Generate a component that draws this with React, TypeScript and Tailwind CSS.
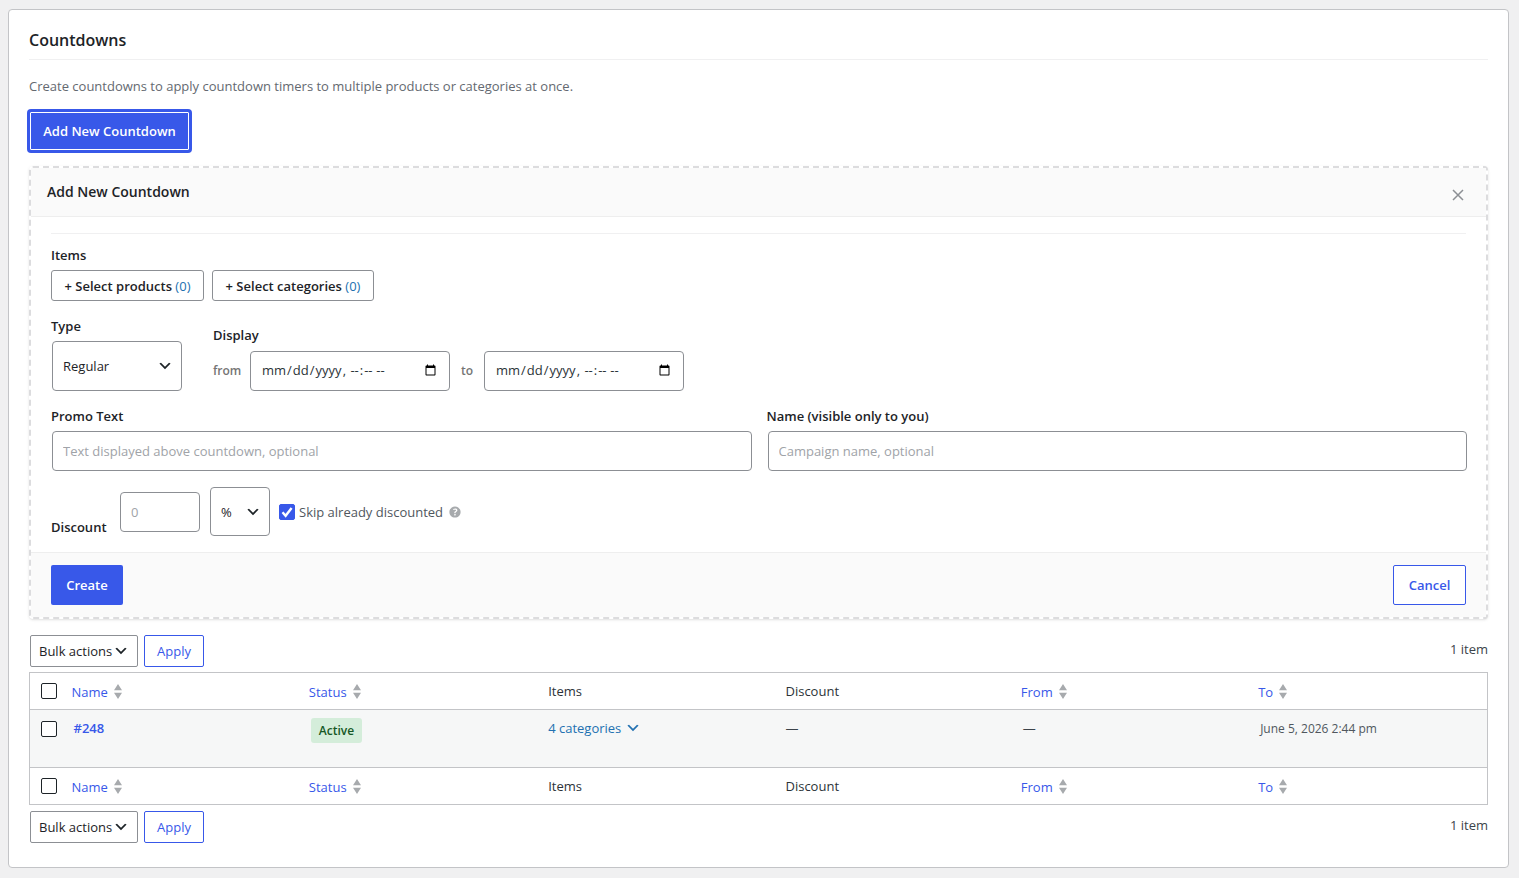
import { useState, type ReactNode, type SelectHTMLAttributes } from "react";

const COLUMNS = [
  { key: "name", label: "Name", sortable: true },
  { key: "status", label: "Status", sortable: true },
  { key: "items", label: "Items", sortable: false },
  { key: "discount", label: "Discount", sortable: false },
  { key: "from", label: "From", sortable: true },
  { key: "to", label: "To", sortable: true },
];

const fieldClass =
  "rounded border border-[#8c8f94] bg-white text-[#2c3338] placeholder:text-[#a0a3a8] focus:outline-none focus:border-[#3858e9]";
const labelClass = "font-semibold text-[#1d2327]";

function Chevron({ className = "" }: { className?: string }) {
  return (
    <svg viewBox="0 0 20 20" className={`size-4 ${className}`} fill="currentColor" aria-hidden="true">
      <path d="M5 6l5 5 5-5 2 1-7 7-7-7 2-1z" />
    </svg>
  );
}

function Select({ wrap = "", className = "", children, ...rest }: SelectHTMLAttributes<HTMLSelectElement> & { wrap?: string; children: ReactNode }) {
  return (
    <div className={`relative ${wrap}`}>
      <select className={`appearance-none w-full h-full border border-[#8c8f94] bg-white text-[#1d2327] ${className}`} {...rest}>
        {children}
      </select>
      <Chevron className="absolute top-1/2 right-[9px] -translate-y-1/2 pointer-events-none text-[#1d2327]" />
    </div>
  );
}

function SortArrows() {
  return (
    <svg viewBox="0 0 8 15" className="w-2 h-[15px]" fill="#a7aaad" aria-hidden="true">
      <path d="M4 0l4 6.300H0zM4 15l4-6.300H0z" />
    </svg>
  );
}

function Toolbar({ id }: { id: string }) {
  return (
    <div className="flex items-center gap-1.5 pl-px">
      <Select id={id} aria-label="Select bulk action" wrap="w-[108px] h-8" className="rounded-xs pl-2 pr-5">
        <option>Bulk actions</option>
        <option>Delete</option>
      </Select>
      <button className="h-8 w-[60px] rounded-xs border border-[#3858e9] bg-white font-medium text-[#3858e9]">Apply</button>
      <span className="ml-auto pb-1 text-[#3c434a]">1 item</span>
    </div>
  );
}

function HeadingRow({ className = "" }: { className?: string }) {
  return (
    <tr className={className}>
      <td className="h-[37px] pl-[11px] align-middle">
        <input type="checkbox" aria-label="Select all" className="block size-4 appearance-none rounded-xs border border-[#1d2327] bg-white" />
      </td>
      {COLUMNS.map((col) => (
        <th key={col.key} scope="col" className={`h-[37px] text-left font-normal text-[#2c3338] ${col.sortable ? "px-2" : "px-2.5"}`}>
          {col.sortable ? (
            <a href="#" className="inline-flex items-center gap-1.5 align-middle text-[#3858e9]">
              {col.label}
              <SortArrows />
            </a>
          ) : (
            col.label
          )}
        </th>
      ))}
    </tr>
  );
}

function CountdownForm({ onClose }: { onClose: () => void }) {
  const [skip, setSkip] = useState(true);

  return (
    <form onSubmit={(e) => e.preventDefault()} className="mt-[15px] rounded border-2 border-dashed border-[#dcdcde] bg-white shadow-sm">
      <div className="flex h-[49px] items-center justify-between border-b border-[#eeeeee] bg-[#fafafa] pl-4 pr-5">
        <h3 className="text-sm font-semibold text-[#1d2327]">Add New Countdown</h3>
        <button type="button" aria-label="Close" onClick={onClose} className="pt-1.5 text-[#8c8f94]">
          <svg viewBox="0 0 16 16" className="size-4" fill="none" stroke="currentColor" strokeWidth="1.500" aria-hidden="true">
            <path d="M3 3l10 10M13 3L3 13" />
          </svg>
        </button>
      </div>

      <div className="py-4 pr-[19px] pl-5">
        <div className="mr-px border-t border-[#f0f0f1] pt-[11px]">
          <p className={`${labelClass} leading-5`}>Items</p>
          <div className="mt-[5px] flex gap-2">
            <button type="button" className="h-[31px] w-[153px] rounded-[3px] border border-[#8c8f94] font-semibold text-[#1d2327]">
              + Select products <span className="font-normal text-[#2271b1]">(0)</span>
            </button>
            <button type="button" className="h-[31px] w-[162px] rounded-[3px] border border-[#8c8f94] font-semibold text-[#1d2327]">
              + Select categories <span className="font-normal text-[#2271b1]">(0)</span>
            </button>
          </div>
        </div>

        <div className="mt-[15px] flex items-end gap-[31px]">
          <div>
            <label htmlFor="type" className={`${labelClass} block leading-5`}>Type</label>
            <Select id="type" wrap="ml-px mt-[5px] h-[50px] w-[130px]" className="rounded px-2.5">
              <option>Regular</option>
              <option>Recurring</option>
            </Select>
          </div>
          <div>
            <p className={`${labelClass} leading-5`}>Display</p>
            <div className="mt-1.5 flex items-center text-xs font-semibold text-[#757575]">
              <label htmlFor="from" className="w-[37px]">from</label>
              <input id="from" type="datetime-local" className={`${fieldClass} h-10 w-[200px] px-2.5 text-[13px] font-normal`} />
              <label htmlFor="to" className="w-[34px] text-center">to</label>
              <input id="to" type="datetime-local" className={`${fieldClass} h-10 w-[200px] px-2.5 text-[13px] font-normal`} />
            </div>
          </div>
        </div>

        <div className="mt-[15px] grid grid-cols-2 gap-[15px]">
          <div>
            <label htmlFor="promo" className={`${labelClass} block leading-5`}>Promo Text</label>
            <div className="mt-[5px] pl-px">
              <input id="promo" type="text" placeholder="Text displayed above countdown, optional" className={`${fieldClass} block h-10 w-full px-2.5`} />
            </div>
          </div>
          <div>
            <label htmlFor="campaign" className={`${labelClass} block leading-5`}>Name (visible only to you)</label>
            <div className="mt-[5px] pl-px">
              <input id="campaign" type="text" placeholder="Campaign name, optional" className={`${fieldClass} block h-10 w-full px-2.5`} />
            </div>
          </div>
        </div>

        <div className="mt-4 flex items-center">
          <label htmlFor="discount" className={`${labelClass} w-[69px] self-end leading-[18px]`}>Discount</label>
          <input id="discount" type="text" placeholder="0" className={`${fieldClass} h-10 w-20 px-2.5`} />
          <Select aria-label="Discount unit" wrap="ml-2.5 h-[49px] w-[60px]" className="rounded px-2.5">
            <option>%</option>
            <option>$</option>
          </Select>
          <label className="ml-[9px] flex items-center gap-1 text-[#50575e]">
            <span className="relative size-4">
              <input
                type="checkbox"
                checked={skip}
                onChange={(e) => setSkip(e.target.checked)}
                className="block size-4 appearance-none rounded-xs border border-[#1d2327] bg-white checked:border-[#3858e9] checked:bg-[#3858e9]"
              />
              {skip && (
                <svg viewBox="0 0 16 16" className="pointer-events-none absolute inset-0 size-4" fill="none" stroke="#fff" strokeWidth="2.400" aria-hidden="true">
                  <path d="M3.500 8.300l3.100 3.500L12.600 4" />
                </svg>
              )}
            </span>
            Skip already discounted
          </label>
          <svg viewBox="0 0 20 20" className="ml-1 size-4" fill="#a7aaad" aria-label="Help">
            <path d="M17 10c0-3.870-3.140-7-7-7-3.870 0-7 3.130-7 7s3.130 7 7 7c3.860 0 7-3.130 7-7zm-6.300 1.480H9.140v-.43c0-.38.080-.7.240-.98s.46-.57.880-.89c.41-.29.680-.53.810-.71.140-.18.200-.39.200-.62 0-.25-.09-.44-.28-.58-.19-.13-.45-.19-.79-.19-.58 0-1.250.19-2 .57l-.64-1.280c.87-.49 1.800-.74 2.770-.74.810 0 1.450.2 1.920.58.480.39.710.91.710 1.550 0 .43-.09.8-.29 1.110-.19.320-.57.670-1.110 1.060-.38.280-.61.490-.71.630-.1.150-.15.340-.15.570v.35zm-1.470 2.740c-.18-.17-.27-.42-.27-.73 0-.33.080-.58.260-.75s.43-.25.770-.25c.32 0 .57.090.75.260s.27.420.27.740c0 .3-.09.550-.27.720-.18.180-.43.270-.75.270-.33 0-.58-.09-.76-.26z" />
          </svg>
        </div>
      </div>

      <div className="flex justify-between border-t border-[#eeeeee] bg-[#fafafa] px-5 py-3">
        <button type="submit" className="h-10 w-[72px] rounded-xs bg-[#3858e9] font-semibold text-white">Create</button>
        <button type="button" onClick={onClose} className="h-10 w-[73px] rounded-xs border border-[#3858e9] bg-white font-semibold text-[#3858e9]">
          Cancel
        </button>
      </div>
    </form>
  );
}

export default function App() {
  const [open, setOpen] = useState(true);

  return (
    <div className="min-h-screen bg-[#f0f0f1] pt-[9px] pr-2.5 pb-2.5 pl-2 font-['Segoe_UI','Open_Sans',sans-serif] text-[13px] leading-5 text-[#3c434a]">
      <main className="rounded border border-[#c3c4c7] bg-white px-5 pt-[18px] pb-6">
        <h2 className="border-b border-[#f0f0f1] pb-[7px] text-base leading-6 font-semibold text-[#1d2327]">Countdowns</h2>
        <p className="mt-4 text-[#646970]">Create countdowns to apply countdown timers to multiple products or categories at once.</p>
        <button
          onClick={() => setOpen(true)}
          className="mt-[15px] block h-10 w-[161px] rounded-xs border border-[#3858e9] bg-[#3858e9] font-semibold text-white shadow-[inset_0_0_0_1px_#fff,0_0_0_2px_#3858e9]"
        >
          Add New Countdown
        </button>

        {open && <CountdownForm onClose={() => setOpen(false)} />}

        <div className="mt-4">
          <Toolbar id="bulk-top" />
        </div>
        <table className="mt-[5px] mb-1.5 w-full table-fixed border-collapse border border-[#c3c4c7]">
          <colgroup>
            <col className="w-[34px]" />
            {COLUMNS.map((col) => (
              <col key={col.key} />
            ))}
          </colgroup>
          <thead>
            <HeadingRow className="border-b border-[#c3c4c7]" />
          </thead>
          <tbody>
            <tr className="h-[58px] bg-[#f6f7f7] align-top">
              <td className="pt-[11px] pl-[11px]">
                <input type="checkbox" aria-label="Select #248" className="block size-4 appearance-none rounded-xs border border-[#1d2327] bg-white" />
              </td>
              <td className="px-2.5 pt-2">
                <a href="#" className="font-semibold text-[#3858e9]">#248</a>
              </td>
              <td className="px-2.5 pt-2">
                <span className="inline-block rounded-[3px] bg-[#d4edda] px-2 py-[3px] text-xs leading-[19px] font-semibold text-[#155724]">Active</span>
              </td>
              <td className="px-2.5 pt-2">
                <button className="flex items-center gap-1 text-[#2271b1]">
                  4 categories
                  <Chevron />
                </button>
              </td>
              <td className="px-2.5 pt-2">—</td>
              <td className="px-2.5 pt-2">—</td>
              <td className="px-2.5 pt-[9px] text-xs leading-5 text-[#50575e]">June 5, 2026 2:44 pm</td>
            </tr>
          </tbody>
          <tfoot>
            <HeadingRow className="border-t border-[#c3c4c7]" />
          </tfoot>
        </table>
        <Toolbar id="bulk-bottom" />
      </main>
    </div>
  );
}
